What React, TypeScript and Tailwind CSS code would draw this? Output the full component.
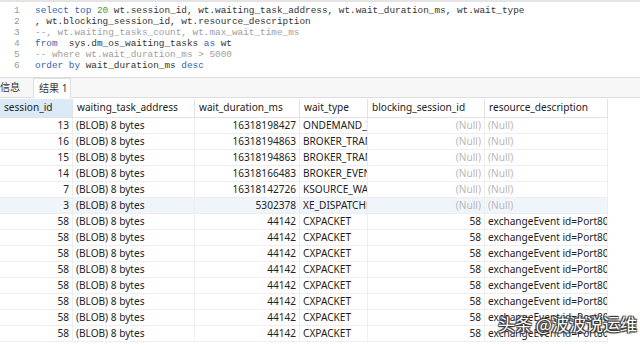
const COLS = [
  { key: 'session_id', w: 73, align: 'right' },
  { key: 'waiting_task_address', w: 122, align: 'left' },
  { key: 'wait_duration_ms', w: 105, align: 'right' },
  { key: 'wait_type', w: 68, align: 'left' },
  { key: 'blocking_session_id', w: 117, align: 'right' },
  { key: 'resource_description', w: 123, align: 'left' },
];

const RAW: [string, string, string, string, string][] = [
  ['13', '16318198427', 'ONDEMAND_TASK_QUEUE', '', ''],
  ['16', '16318194863', 'BROKER_TRANSMITTER', '', ''],
  ['15', '16318194863', 'BROKER_TRANSMITTER', '', ''],
  ['14', '16318166483', 'BROKER_EVENTHANDLER', '', ''],
  ['7', '16318142726', 'KSOURCE_WAKEUP', '', ''],
  ['3', '5302378', 'XE_DISPATCHER_WAIT', '', ''],
  ['58', '44142', 'CXPACKET', '58', 'exchangeEvent id=Port80'],
  ['58', '44142', 'CXPACKET', '58', 'exchangeEvent id=Port80'],
  ['58', '44142', 'CXPACKET', '58', 'exchangeEvent id=Port80'],
  ['58', '44142', 'CXPACKET', '58', 'exchangeEvent id=Port80'],
  ['58', '44142', 'CXPACKET', '58', 'exchangeEvent id=Port80'],
  ['58', '44142', 'CXPACKET', '58', 'exchangeEvent id=Port80'],
  ['58', '44142', 'CXPACKET', '58', 'exchangeEvent id=Port80'],
  ['58', '44142', 'CXPACKET', '58', 'exchangeEvent id=Port80'],
];

const kw = 'text-[#2f64b3]';
const id = 'text-[#333]';
const cm = 'text-[#a0a0a0]';

function Code() {
  return (
    <div className="flex flex-col">
      <span><span className={kw}>select top </span><span className="text-[#3a9a3a]">20</span><span className={id}> wt.session_id, wt.waiting_task_address, wt.wait_duration_ms, wt.wait_type</span></span>
      <span className={id}>, wt.blocking_session_id, wt.resource_description</span>
      <span className={cm}>--, wt.waiting_tasks_count, wt.max_wait_time_ms</span>
      <span><span className={kw}>from</span><span className={id}>  sys.dm_os_waiting_tasks </span><span className={kw}>as</span><span className={id}> wt</span></span>
      <span className={cm}>-- where wt.wait_duration_ms &gt; 5000</span>
      <span><span className={kw}>order by</span><span className={id}> wait_duration_ms </span><span className={kw}>desc</span></span>
    </div>
  );
}

export default function App() {
  return (
    <div className="relative w-[640px] h-[345px] overflow-hidden bg-white text-[10.1px] text-[#222]" style={{ fontFamily: '"Noto Sans", "Noto Sans CJK SC", sans-serif' }}>
      {/* editor */}
      <div className="h-[78px] border-t-[2px] border-[#e4e4e4] border-b border-b-[#dcdcdc] flex pt-[3px] leading-[11px] text-[9.4px] whitespace-pre" style={{ fontFamily: '"Liberation Mono", monospace' }}>
        <div className="w-[35px] flex flex-col items-start pl-[14px] text-[#9a9a9a]">
          {[1, 2, 3, 4, 5, 6].map((n) => <span key={n}>{n}</span>)}
        </div>
        <Code />
      </div>

      {/* tabs */}
      <div className="h-[20px] flex items-end bg-[#f7f7f7] border-b border-[#dedede] whitespace-nowrap">
        <div className="h-[19px] w-[33px] flex items-center text-[#333]">信息</div>
        <div className="h-[20px] w-[38px] px-[5px] flex items-center bg-white border-x border-t border-[#dedede] text-[#333] -mb-px">结果 1</div>
      </div>

      {/* grid */}
      <div className="w-[608px] mt-px">
        <div className="flex h-[19px] border-b border-[#e2e2e2]">
          {COLS.map((c, i) => (
            <div
              key={c.key}
              className={`flex items-center px-[4px] border-r border-[#e2e2e2] whitespace-nowrap overflow-hidden ${i === 0 ? 'bg-[#dce9f6]' : 'bg-white'}`}
              style={{ width: c.w }}
            >
              {c.key}
            </div>
          ))}
        </div>
        {RAW.map((r, ri) => {
          const cells = [r[0], '(BLOB) 8 bytes', r[1], r[2], r[3], r[4]];
          return (
            <div key={ri} className={`flex h-[16px] border-b border-[#eeeeee] ${ri === 5 ? 'bg-[#f0f5fb]' : 'bg-white'}`}>
              {cells.map((v, ci) => {
                const isNull = v === '';
                return (
                  <div
                    key={ci}
                    className={`flex items-center pl-[3px] pr-[3px] border-r border-[#eeeeee] whitespace-nowrap overflow-hidden ${COLS[ci].align === 'right' ? 'justify-end' : 'justify-start'} ${isNull ? 'text-[#b8b8b8]' : 'text-[#222]'}`}
                    style={{ width: COLS[ci].w }}
                  >
                    {isNull ? '(Null)' : v}
                  </div>
                );
              })}
            </div>
          );
        })}
      </div>

      {/* watermark */}
      <div
        className="absolute left-[498px] top-[314px] text-[17px] leading-[20px] text-white whitespace-nowrap"
        style={{ textShadow: '0 0 1px #333, 1px 1px 1px #333, -1px -1px 1px #333, 1px -1px 1px #333, -1px 1px 1px #333', fontFamily: '"Noto Sans CJK SC", sans-serif' }}
      >
        头条 @波波说运维
      </div>
    </div>
  );
}
